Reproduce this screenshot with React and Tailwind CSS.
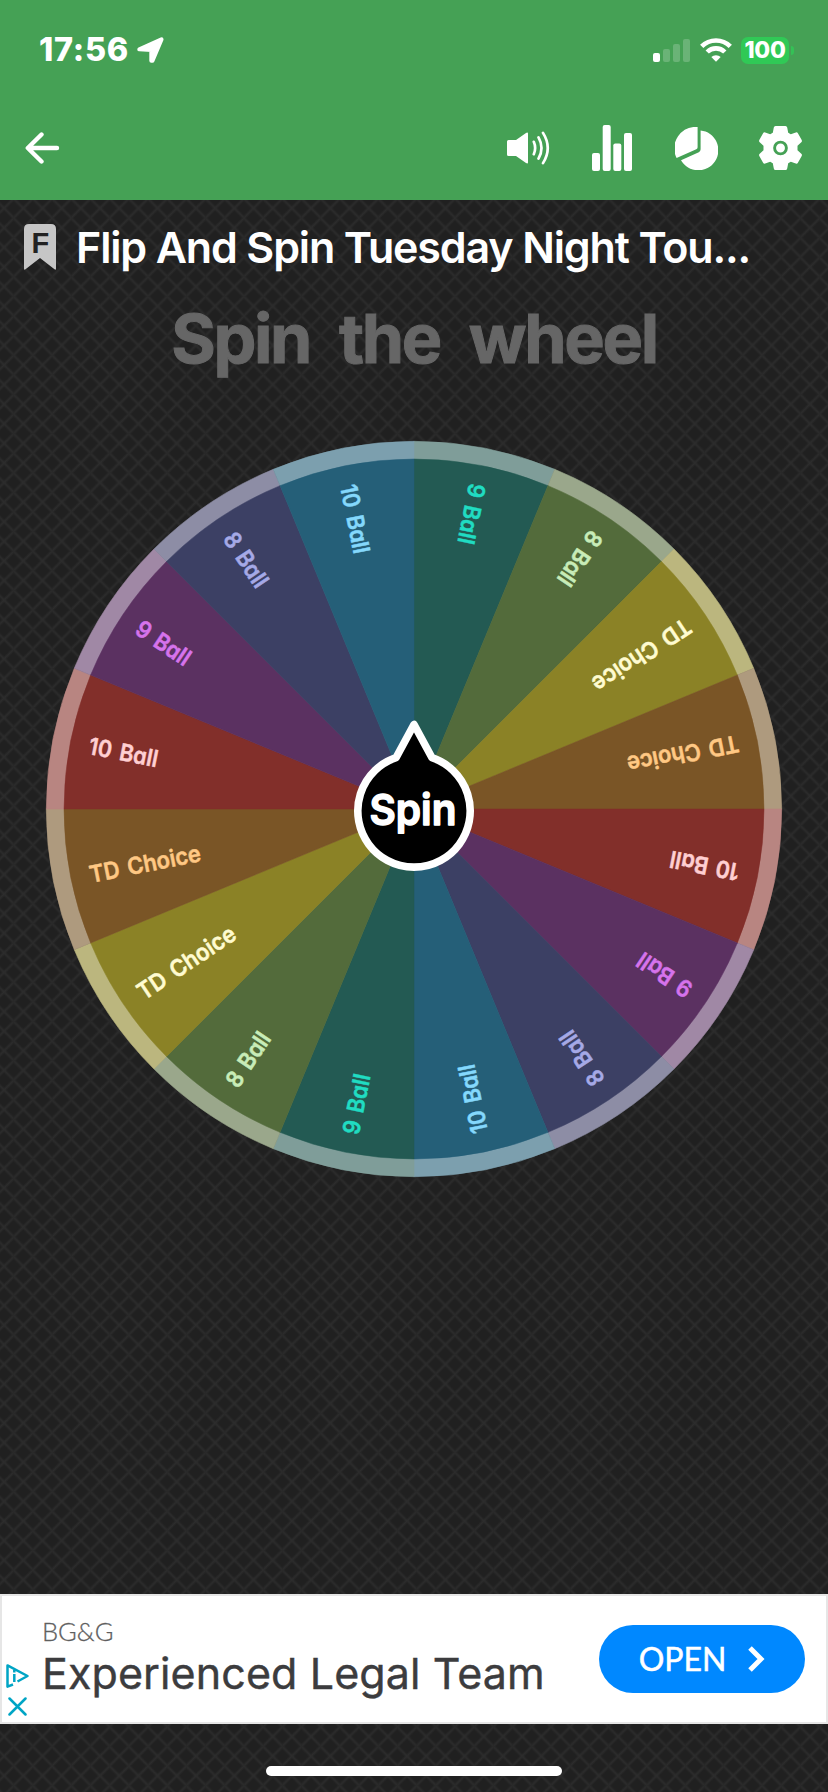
import { useState } from 'react'

const SLICES = [
  { label: '9 Ball',    len: 61,  fill: '#235a53', ring: '#7f9d99', text: '#20dcc2' },
  { label: '8 Ball',    len: 61,  fill: '#536b3b', ring: '#9aa78b', text: '#c8ecb8' },
  { label: 'TD Choice', len: 113, fill: '#8b8226', ring: '#bbb67e', text: '#fffbd0' },
  { label: 'TD Choice', len: 113, fill: '#7a5526', ring: '#ae9a7e', text: '#ffc884' },
  { label: '10 Ball',   len: 70,  fill: '#822f2a', ring: '#b88581', text: '#ffcfd2' },
  { label: '9 Ball',    len: 61,  fill: '#5b3161', ring: '#a088a5', text: '#d673ec' },
  { label: '8 Ball',    len: 61,  fill: '#3c4064', ring: '#8d8da5', text: '#a5a9e6' },
  { label: '10 Ball',   len: 70,  fill: '#255f78', ring: '#7c9fae', text: '#84d8fc' },
]

const WHEEL = [...SLICES, ...SLICES]
const STEP = 360 / WHEEL.length

function point(r, deg) {
  const a = ((deg - 90) * Math.PI) / 180
  return `${(r * Math.cos(a)).toFixed(2)} ${(r * Math.sin(a)).toFixed(2)}`
}

function wedge(r, i) {
  return `M0 0L${point(r, i * STEP)}A${r} ${r} 0 0 1 ${point(r, (i + 1) * STEP)}Z`
}

function StatusBar() {
  return (
    <div className="flex items-center h-[100px] pl-[39px] pr-[34px]">
      <span className="w-[91px] text-[32.5px] leading-none font-extrabold tracking-[0.7px] whitespace-nowrap">17:56</span>
      <svg className="ml-[7px]" width="27" height="26" viewBox="0 0 27 26" fill="#fff" stroke="#fff" strokeWidth="4" strokeLinejoin="round">
        <path d="M2.300 12.300 24.500 2.400 15.500 23.700H14.300V12.900Z" />
      </svg>
      <div className="flex items-end gap-[3px] h-[23px] ml-auto">
        <i className="w-[7px] h-[9px] rounded-[2px] bg-white" />
        <i className="w-[7px] h-[13px] rounded-[2px] bg-white/20" />
        <i className="w-[7px] h-[18px] rounded-[2px] bg-white/20" />
        <i className="w-[7px] h-[23px] rounded-[2px] bg-white/20" />
      </div>
      <svg className="ml-[10px]" width="32" height="24" viewBox="0 0 32 24" fill="none" stroke="#fff" strokeWidth="4.600">
        <path d="M1.700 8.400a20.200 20.200 0 0 1 28.600 0" />
        <path d="M7.200 14a12.400 12.400 0 0 1 17.600 0" />
        <path d="M16 23.800 11.300 19.100a6.600 6.600 0 0 1 9.400 0Z" fill="#fff" stroke="none" />
      </svg>
      <div className="flex items-center gap-[2px] ml-[9px]">
        <div className="flex items-center justify-center w-[48px] h-[27px] rounded-[7px] bg-[#30c956]">
          <span className="text-[23px] leading-none font-extrabold tracking-[-0.3px]">100</span>
        </div>
        <i className="w-[3px] h-[9px] rounded-r-full bg-[#30c956]/80" />
      </div>
    </div>
  )
}

function NavBar({ muted, onMute }) {
  return (
    <nav className="flex items-center h-[100px] pl-[25px] pr-[26px] pb-[4px]">
      <button aria-label="Back" className="mr-auto">
        <svg width="35" height="34" viewBox="0 0 35 34" fill="none" stroke="#fff" strokeWidth="4.400" strokeLinecap="round" strokeLinejoin="round">
          <path d="M16.500 3.500 2.800 17l13.700 13.500M3 17h29" />
        </svg>
      </button>
      <button aria-label="Sound" onClick={onMute}>
        <svg width="43" height="36" viewBox="0 0 43 36">
          <path d="M1.500 10H9L19 2.900Q21 1.800 21 3.600V32.400Q21 34.200 19 33.100L9 26H1.500Q0 26 0 24.500v-13Q0 10 1.500 10Z" fill="#fff" />
          {!muted && (
            <path d="M26.800 11.800q2.700 6.200 0 12.400M31.500 7.400q6 10.600 0 21.200M36 2.900q9.500 15.100 0 30.200" fill="none" stroke="#fff" strokeWidth="2.700" strokeLinecap="round" />
          )}
        </svg>
      </button>
      <button aria-label="Results" className="ml-[42px]">
        <svg width="40" height="46" viewBox="0 0 40 46" fill="#fff">
          <rect x="0" y="28" width="8" height="18" rx="2" />
          <rect x="10.700" y="0" width="8" height="46" rx="2" />
          <rect x="21.300" y="18.500" width="8" height="27.500" rx="2" />
          <rect x="32" y="8" width="8" height="38" rx="2" />
        </svg>
      </button>
      <button aria-label="Weights" className="ml-[43px]">
        <svg width="43" height="43" viewBox="0 0 43 43" fill="#fff">
          <path d="M22.600 0V20.200Q22.600 21.600 21.300 22.200L1.600 31A21.500 21.500 0 0 1 22.600 0Z" />
          <path d="M25.600 3.400A20 20 0 1 1 6 33.200L23.800 25.200Q25.600 24.300 25.600 22.300Z" />
        </svg>
      </button>
      <button aria-label="Settings" className="ml-[41px]">
        <svg width="43" height="44" viewBox="-21.500 -22 43 44" fill="#fff">
          <path d="M-5-22H5Q6.400-22 6.700-20.500L7.700-15.300 10.300-13.800 15.300-15.500Q16.700-16 17.400-14.700L21.200-8Q21.800-6.700 20.800-5.800L17-2.200V2.200L20.800 5.800Q21.800 6.700 21.200 8L17.400 14.700Q16.700 16 15.300 15.500L10.300 13.800 7.700 15.300 6.700 20.500Q6.400 22 5 22H-5Q-6.400 22-6.700 20.500L-7.700 15.300-10.300 13.800-15.300 15.500Q-16.700 16-17.400 14.700L-21.200 8Q-21.800 6.700-20.800 5.800L-17 2.200V-2.200L-20.800-5.800Q-21.800-6.700-21.200-8L-17.400-14.700Q-16.700-16-15.300-15.500L-10.300-13.800-7.700-15.300-6.700-20.500Q-6.400-22-5-22Z" />
          <circle r="5.900" fill="none" stroke="#45a155" strokeWidth="2.900" />
        </svg>
      </button>
    </nav>
  )
}

function Wheel({ angle, onSpin }) {
  return (
    <svg className="block overflow-visible" width="736" height="736" viewBox="-368 -368 736 736">
      <g transform={`rotate(${angle})`}>
        {WHEEL.map((s, i) => <path key={i} d={wedge(367.7, i)} fill={s.ring} stroke={s.ring} strokeWidth="0.600" />)}
        {WHEEL.map((s, i) => <path key={i} d={wedge(350, i)} fill={s.fill} stroke={s.fill} strokeWidth="0.500" />)}
        {WHEEL.map((s, i) => (
          <text
            key={i}
            x="-331"
            y="9.500"
            textLength={s.len}
            lengthAdjust="spacingAndGlyphs"
            fill={s.text}
            stroke={s.text}
            strokeWidth="0.500"
            strokeLinejoin="round"
            transform={`rotate(${(i + 0.5) * STEP + 90})`}
            className="text-[23.5px] font-semibold [word-spacing:3px] [font-feature-settings:'cv11'_1]"
          >
            {s.label}
          </text>
        ))}
      </g>
      <g className="cursor-pointer" onClick={onSpin}>
        <path
          d="M0-84.500-18-51.300A56.200 56.200 0 1 0 18-51.300Z"
          fill="#000"
          stroke="#fff"
          strokeWidth="7.600"
          strokeLinejoin="round"
        />
        <text
          x="-44.500"
          y="16"
          textLength="87"
          lengthAdjust="spacingAndGlyphs"
          fill="#fff"
          stroke="#fff"
          strokeWidth="1.500"
          strokeLinejoin="round"
          className="text-[43px] font-semibold"
        >
          Spin
        </text>
      </g>
    </svg>
  )
}

function AdBanner() {
  return (
    <div className="flex items-center h-[130px] bg-white border-2 border-[#e6e6e6] pr-[21px]">
      <div className="flex flex-col items-center gap-[9px] w-[40px] pr-[10px] pt-[62px]">
        <svg width="23" height="24" viewBox="0 0 23 24" fill="none" stroke="#00a5c5" strokeWidth="2.500" strokeLinejoin="round">
          <path d="M7 20.500 1.500 22.600V1.400L21.500 12 11.500 17.500" />
          <path d="M8.300 10v8M8.300 6v2.400" />
        </svg>
        <svg width="19" height="19" viewBox="0 0 19 19" fill="none" stroke="#00a5c5" strokeWidth="2.500" strokeLinecap="round">
          <path d="M1.500 1.500l16 16M17.500 1.500l-16 16" />
        </svg>
      </div>
      <div className="flex flex-col whitespace-nowrap pb-[2px]">
        <span className="text-[25.5px] leading-[30px] text-[#5f5f5f] font-['Lato',sans-serif] font-light [-webkit-text-stroke:0.3px_#5f5f5f]">BG&amp;G</span>
        <span className="text-[43px] leading-[54px] tracking-[0.1px] text-[#3c3c3e] [-webkit-text-stroke:0.4px_#3c3c3e]">Experienced Legal Team</span>
      </div>
      <button className="flex items-center justify-center gap-[22px] w-[206px] h-[68px] ml-auto rounded-full bg-[#0088ff] text-white">
        <span className="text-[32px] leading-none font-['Lato',sans-serif] [-webkit-text-stroke:0.5px_white]">OPEN</span>
        <svg width="17" height="26" viewBox="0 0 17 26" fill="none" stroke="#fff" strokeWidth="5">
          <path d="M2 2l11 11L2 24" />
        </svg>
      </button>
    </div>
  )
}

export default function App() {
  const [angle, setAngle] = useState(0)
  const [muted, setMuted] = useState(false)

  return (
    <div className="flex flex-col w-[828px] h-[1792px] overflow-hidden text-white font-['Inter','Liberation_Sans',sans-serif] bg-[#202020] bg-[linear-gradient(45deg,transparent_42%,#2c2c2c_50%,transparent_58%),linear-gradient(-45deg,transparent_42%,#2c2c2c_50%,transparent_58%)] bg-size-[19.2px_19.6px] bg-position-[13.7px_2.5px]">
      <header className="h-[200px] shrink-0 bg-[#45a155]">
        <StatusBar />
        <NavBar muted={muted} onMute={() => setMuted(!muted)} />
      </header>

      <main className="flex flex-col items-center flex-1">
        <div className="flex items-center w-full h-[94px] pl-[24px]">
          <svg width="32" height="46" viewBox="0 0 32 46">
            <path d="M5 0H27Q32 0 32 5V44.500Q32 46.500 30.500 45.300L16 34 1.500 45.300Q0 46.500 0 44.500V5Q0 0 5 0Z" fill="#c6c6c6" />
            <text x="7.500" y="29" fill="#222" className="text-[29px] font-semibold font-['Liberation_Sans',sans-serif]">F</text>
          </svg>
          <h1 className="ml-[20px] text-[43px] leading-none font-semibold tracking-[-1.15px] whitespace-nowrap">
            Flip And Spin Tuesday Night Tou...
          </h1>
        </div>

        <h2 className="h-[147px] pt-[8px] text-[68px] leading-[72px] font-bold tracking-[-2.3px] text-[#666] whitespace-nowrap [word-spacing:15px] [-webkit-text-stroke:1px_#666]">
          Spin the wheel
        </h2>

        <Wheel angle={angle} onSpin={() => setAngle(angle + 360 / WHEEL.length)} />
      </main>

      <AdBanner />
      <footer className="flex justify-center h-[68px] pt-[42px]">
        <div className="w-[296px] h-[10px] rounded-full bg-white" />
      </footer>
    </div>
  )
}
